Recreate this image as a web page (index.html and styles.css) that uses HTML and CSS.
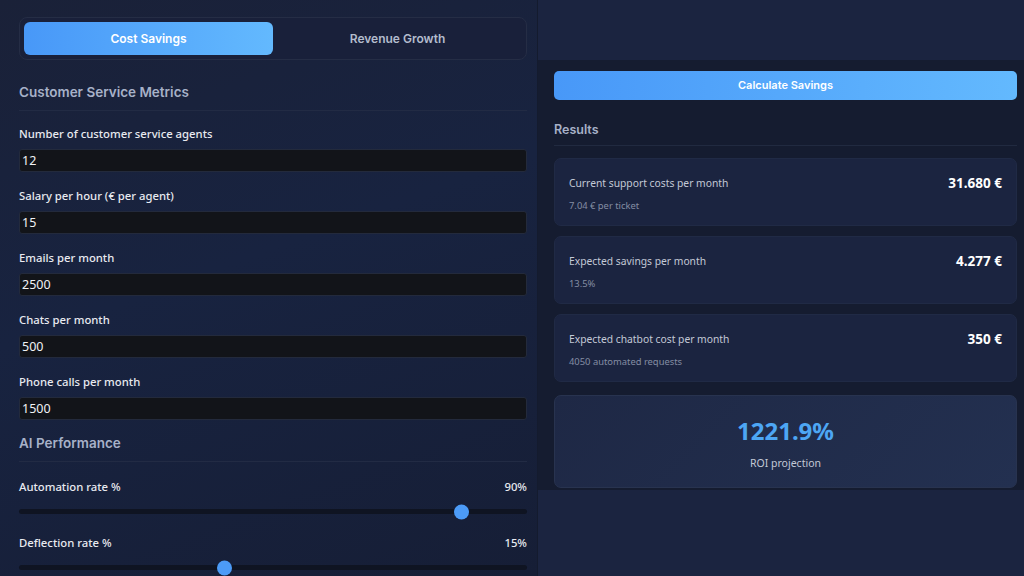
FILE: index.html
```html
<!DOCTYPE html>
<html lang="en">
<head>
<meta charset="utf-8">
<title>ROI Calculator</title>
<link rel="stylesheet" href="styles.css">
</head>
<body>
<div class="page">
  <section class="left">
    <div class="tabs">
      <div class="tab active">Cost Savings</div>
      <div class="tab">Revenue Growth</div>
    </div>

    <h2 class="section-title">Customer Service Metrics</h2>

    <div class="field">
      <label class="label">Number of customer service agents</label>
      <div class="input">12</div>
    </div>
    <div class="field">
      <label class="label">Salary per hour (€ per agent)</label>
      <div class="input">15</div>
    </div>
    <div class="field">
      <label class="label">Emails per month</label>
      <div class="input">2500</div>
    </div>
    <div class="field">
      <label class="label">Chats per month</label>
      <div class="input">500</div>
    </div>
    <div class="field">
      <label class="label">Phone calls per month</label>
      <div class="input">1500</div>
    </div>

    <h2 class="section-title ai">AI Performance</h2>

    <div class="slider-field">
      <div class="slider-head"><span>Automation rate %</span><span>90%</span></div>
      <div class="track"><div class="thumb" style="left: 85.7%"></div></div>
    </div>
    <div class="slider-field">
      <div class="slider-head"><span>Deflection rate %</span><span>15%</span></div>
      <div class="track"><div class="thumb" style="left: 38.9%"></div></div>
    </div>
  </section>

  <section class="right">
    <div class="results-panel">
      <button class="calc-btn">Calculate Savings</button>
      <h3 class="results-title">Results</h3>

      <div class="card">
        <div class="card-text">
          <div class="card-title">Current support costs per month</div>
          <div class="card-sub">7.04 € per ticket</div>
        </div>
        <div class="card-value">31.680 €</div>
      </div>
      <div class="card">
        <div class="card-text">
          <div class="card-title">Expected savings per month</div>
          <div class="card-sub">13.5%</div>
        </div>
        <div class="card-value">4.277 €</div>
      </div>
      <div class="card">
        <div class="card-text">
          <div class="card-title">Expected chatbot cost per month</div>
          <div class="card-sub">4050 automated requests</div>
        </div>
        <div class="card-value">350 €</div>
      </div>

      <div class="roi-card">
        <div class="roi-value">1221.9%</div>
        <div class="roi-label">ROI projection</div>
      </div>
    </div>
  </section>
</div>
</body>
</html>
```

FILE: styles.css
```css
* { box-sizing: border-box; }

html, body {
  margin: 0;
  padding: 0;
  width: 1024px;
  height: 576px;
  overflow: hidden;
  background: #1b2440;
  font-family: "Noto Sans", "Open Sans", sans-serif;
  color: #e6e9ef;
}

.page {
  display: flex;
  width: 1024px;
  height: 576px;
}

.left {
  width: 538px;
  flex: none;
  padding: 17px 10px 0 19px;
  background: linear-gradient(160deg, #1a2138 0%, #182340 45%, #161e36 100%);
  border-right: 1px solid #141b2e;
}

.tabs {
  display: flex;
  padding: 4px;
  height: 43px;
  border: 1px solid #252d45;
  border-radius: 8px;
  background: #19203a;
}

.tab {
  flex: 1;
  display: flex;
  align-items: center;
  justify-content: center;
  font-family: "Inter", "Liberation Sans", sans-serif;
  font-size: 12px;
  font-weight: 600;
  color: #b3bccd;
  border-radius: 6px;
}

.tab.active {
  background: linear-gradient(90deg, #4898f8 0%, #63b9fe 100%);
  color: #ffffff;
}

.section-title {
  margin: 22px 0 0;
  padding-bottom: 8px;
  border-bottom: 1px solid #222b44;
  font-family: "Inter", "Liberation Sans", sans-serif;
  font-size: 13.5px;
  line-height: 20px;
  font-weight: 600;
  color: #a7b1c8;
}

.section-title.ai {
  margin-top: 13px;
}

.field {
  display: flex;
  flex-direction: column;
  margin-top: 14px;
}

.field + .field {
  margin-top: 15px;
}

.label {
  font-size: 11.3px;
  line-height: 18px;
  font-weight: 500;
  color: #e8eaf0;
}

.input {
  margin-top: 6px;
  height: 23px;
  padding: 0 2px;
  display: flex;
  align-items: center;
  background: #121419;
  border: 1px solid #232a3c;
  border-radius: 3px;
  font-size: 12.5px;
  color: #f0f2f5;
}

.slider-field {
  margin-top: 16px;
}

.slider-field + .slider-field {
  margin-top: 20px;
}

.slider-head {
  display: flex;
  justify-content: space-between;
  font-size: 11.3px;
  line-height: 18px;
  font-weight: 500;
  color: #e8eaf0;
}

.track {
  position: relative;
  margin: 13px 0 0;
  height: 5px;
  border-radius: 3px;
  background: #0f1422;
}

.thumb {
  position: absolute;
  top: 50%;
  width: 15px;
  height: 15px;
  transform: translateY(-50%);
  border-radius: 50%;
  background: #4c9bf7;
}

.right {
  flex: 1;
  padding-top: 60px;
}

.results-panel {
  background: #151c30;
  padding: 11px 7px 2px 16px;
}

.calc-btn {
  display: block;
  width: 100%;
  height: 29px;
  border: none;
  border-radius: 5px;
  background: linear-gradient(90deg, #4898f8 0%, #63b9fe 100%);
  color: #ffffff;
  font-family: "Inter", "Liberation Sans", sans-serif;
  font-size: 11px;
  font-weight: 600;
  padding: 0 0 2px;
}

.results-title {
  margin: 21px 0 0;
  padding-bottom: 6px;
  border-bottom: 1px solid #212a40;
  font-family: "Inter", "Liberation Sans", sans-serif;
  font-size: 12.5px;
  line-height: 18px;
  font-weight: 600;
  color: #a7b1c8;
}

.card {
  display: flex;
  justify-content: space-between;
  align-items: flex-start;
  height: 68px;
  margin-top: 10px;
  padding: 15px 14px 0 14px;
  background: #1b2440;
  border: 1px solid #202a45;
  border-radius: 7px;
}

.results-title + .card {
  margin-top: 12px;
}

.card-title {
  font-size: 10.3px;
  line-height: 18px;
  color: #c3c9d6;
}

.card-sub {
  margin-top: 8px;
  font-size: 9.4px;
  line-height: 12px;
  color: #848da3;
}

.card-value {
  font-size: 13.5px;
  line-height: 18px;
  font-weight: 700;
  color: #ffffff;
}

.roi-card {
  margin-top: 13px;
  height: 93px;
  display: flex;
  flex-direction: column;
  align-items: center;
  padding-top: 20px;
  background: linear-gradient(135deg, #1e2845 0%, #233050 100%);
  border: 1px solid #28334f;
  border-radius: 7px;
}

.roi-value {
  font-size: 24px;
  line-height: 30px;
  font-weight: 700;
  color: #4da6f4;
}

.roi-label {
  margin-top: 9px;
  font-size: 10.5px;
  line-height: 16px;
  color: #c3c9d6;
}
```
